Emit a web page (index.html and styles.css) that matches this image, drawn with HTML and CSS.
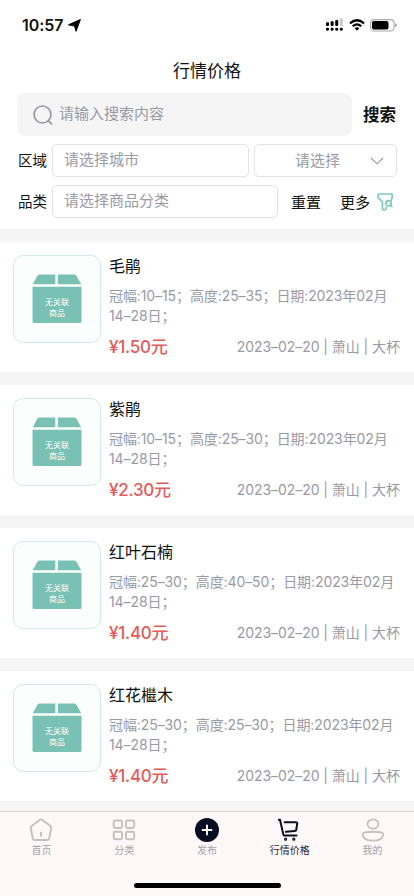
FILE: index.html
```html
<!DOCTYPE html>
<html lang="zh-CN">
<head>
<meta charset="utf-8">
<meta name="viewport" content="width=device-width, initial-scale=1">
<title>行情价格</title>
<link rel="stylesheet" href="styles.css">
</head>
<body>
<svg width="0" height="0" class="defs">
  <symbol id="box" viewBox="0 0 50 50">
    <path d="M7.5.5H23.3V10.3H.8L5.2 2Q6 .5 7.500 .5ZM26 .5H42.300Q43.800 .5 44.600 2L49.200 10.300H26Z"/>
    <path d="M.5 12.800H49.500V47.500Q49.500 49 48 49H2Q.5 49 .5 47.500Z"/>
  </symbol>
</svg>
<div class="statusbar">
  <span class="clock">10:57</span>
  <svg class="loc" width="13" height="13" viewBox="0 0 13 13"><path d="M12.400 .5 8 12.300 6.500 7.100.5 5.800Z" stroke="#000" stroke-width="1" stroke-linejoin="round"/></svg>
  <svg class="signal" width="17" height="14" viewBox="0 0 17 14"><g><rect x="0" y="4.300" width="3" height="3.700" rx="1"/><rect x="4.600" y="3.300" width="3" height="4.700" rx="1"/><rect x="9.200" y="2" width="3" height="6" rx="1"/><rect x="13.800" y=".3" width="3" height="7.700" rx="1" fill="#ccc"/><rect x="0" y="9.700" width="3" height="3" rx="1.100"/><rect x="4.600" y="9.700" width="3" height="3" rx="1.100"/><rect x="9.200" y="9.700" width="3" height="3" rx="1.100"/><rect x="13.800" y="9.700" width="3" height="3" rx="1.100"/></g></svg>
  <svg class="wifi" width="16" height="12" viewBox="0 0 16 12"><g fill="none" stroke="#000" stroke-width="2.200"><path d="M1 4.400Q8-1.900 15 4.400"/><path d="M3.700 7.300Q8 3.500 12.300 7.300"/></g><path d="M5.700 9.200Q8 7.400 10.300 9.200L8 11.700Z"/></svg>
  <svg class="battery" width="27" height="13" viewBox="0 0 27 13"><rect x=".6" y=".6" width="23.400" height="11.400" rx="3.500" fill="none" stroke="#aaa" stroke-width="1.100"/><rect x="2" y="2" width="16.500" height="8.600" rx="2"/><path d="M25.200 4.300Q26.700 5 26.700 6.300T25.200 8.300Z" fill="#999"/></svg>
</div>
<h1 class="title">行情价格</h1>
<div class="search">
  <div class="searchbox">
    <svg width="20" height="20" viewBox="0 0 20 20" fill="none" stroke="#9698a6" stroke-width="1.700" stroke-linecap="round"><circle cx="9.500" cy="9.500" r="8.500"/><path d="m15.600 15.800 2.900 3"/></svg>
    <span>请输入搜索内容</span>
  </div>
  <b class="go">搜索</b>
</div>
<div class="filter">
  <span class="name">区域</span>
  <div class="field city">请选择城市</div>
  <div class="field pick"><span>请选择</span><svg width="14" height="8" viewBox="0 0 14 8" fill="none" stroke="#96969e" stroke-width="1.100"><path d="m1 1 6 5.800L13 1"/></svg></div>
</div>
<div class="filter last">
  <span class="name">品类</span>
  <div class="field kind">请选择商品分类</div>
  <span class="reset">重置</span>
  <span class="more">更多</span>
  <svg class="funnel" width="17" height="18" viewBox="0 0 17 18" fill="none" stroke="#7dcabc" stroke-width="1.700" stroke-linejoin="round" stroke-linecap="round"><path d="M15.200 5V1.500Q15.200 1 14.600 1H2Q1 1 1 2V3.600Q1 4.500 1.700 5.200L5.500 9.200V15.500Q5.500 16.800 6.500 16.800H7.300Q9.300 16.400 9.300 14.600"/><circle cx="11.600" cy="10.200" r="2.600"/><path d="m13.600 12.200 1.400 1.500M15.200 5l-1.200 2.500"/></svg>
</div>
<main class="list">
  <article class="card">
    <div class="thumb"><svg class="box"><use href="#box"/></svg><span class="none">无关联<br>商品</span></div>
    <div class="info"><h2>毛鹃</h2><p>冠幅:10–15；高度:25–35；日期:2023年02月<br>14–28日；</p>
      <div class="row"><strong>¥1.50元</strong><span>2023–02–20 | 萧山 | 大杯</span></div></div>
  </article>
  <article class="card">
    <div class="thumb"><svg class="box"><use href="#box"/></svg><span class="none">无关联<br>商品</span></div>
    <div class="info"><h2>紫鹃</h2><p>冠幅:10–15；高度:25–30；日期:2023年02月<br>14–28日；</p>
      <div class="row"><strong>¥2.30元</strong><span>2023–02–20 | 萧山 | 大杯</span></div></div>
  </article>
  <article class="card">
    <div class="thumb"><svg class="box"><use href="#box"/></svg><span class="none">无关联<br>商品</span></div>
    <div class="info"><h2>红叶石楠</h2><p>冠幅:25–30；高度:40–50；日期:2023年02月<br>14–28日；</p>
      <div class="row"><strong>¥1.40元</strong><span>2023–02–20 | 萧山 | 大杯</span></div></div>
  </article>
  <article class="card">
    <div class="thumb"><svg class="box"><use href="#box"/></svg><span class="none">无关联<br>商品</span></div>
    <div class="info"><h2>红花檵木</h2><p>冠幅:25–30；高度:25–30；日期:2023年02月<br>14–28日；</p>
      <div class="row"><strong>¥1.40元</strong><span>2023–02–20 | 萧山 | 大杯</span></div></div>
  </article>
</main>
<footer class="tabbar">
  <nav class="tabs">
    <div class="tab"><svg width="24" height="24" viewBox="0 0 24 24" fill="none" stroke="#c5bfc0" stroke-width="1.900" stroke-linecap="round" stroke-linejoin="round"><path d="M10.700 2Q12 1.100 13.300 2L21.400 8Q22.500 8.900 22.200 10.200L20.300 20.200Q19.900 22 18.200 22H5.800Q4.100 22 3.700 20.200L1.800 10.200Q1.500 8.900 2.600 8Z"/><path d="M12 14.800v3" stroke-width="2"/></svg>首页</div>
    <div class="tab"><svg width="24" height="24" viewBox="0 0 24 24" fill="none" stroke="#c5bfc0" stroke-width="1.900"><rect x="1.700" y="2.500" width="8.300" height="7.500" rx="1.500"/><rect x="13.900" y="2.500" width="8.300" height="7.500" rx="1.500"/><rect x="1.700" y="13.800" width="8.300" height="7.500" rx="1.500"/><rect x="13.900" y="13.800" width="8.300" height="7.500" rx="1.500"/></svg>分类</div>
    <div class="tab"><svg width="24" height="24" viewBox="0 0 24 24"><circle cx="12" cy="12" r="12" fill="#080f22"/><path d="M12 6.800v10.400M6.800 12h10.400" stroke="#fff" stroke-width="1.900"/></svg>发布</div>
    <div class="tab active"><svg width="24" height="24" viewBox="0 0 24 24" fill="none" stroke="#080f22" stroke-width="2" stroke-linecap="round" stroke-linejoin="round"><path d="M.8 1.800H2L5.400 16.800Q5.600 17.600 6.400 17.600H18.500M6.700 4.200H17.900Q19.400 4.200 19.200 5.700L18.300 11.500Q18.100 12.900 16.700 13L7.900 13.800"/><circle cx="7.600" cy="21.200" r=".6"/><circle cx="15.800" cy="21.200" r=".6"/></svg>行情价格</div>
    <div class="tab"><svg width="24" height="24" viewBox="0 0 24 24" fill="none" stroke="#c5bfc0" stroke-width="1.800"><ellipse cx="12" cy="6.100" rx="5.500" ry="4.700"/><path d="M3.500 14.500Q12 13 20.500 14.500 22.500 15 22.200 17 21.300 22.700 12 22.700T1.800 17Q1.500 15 3.500 14.500Z"/></svg>我的</div>
  </nav>
  <div class="home"></div>
</footer>
</body>
</html>
```

FILE: styles.css
```css
* { box-sizing: border-box; }
body {
  margin: 0;
  width: 414px;
  height: 896px;
  overflow: hidden;
  display: flex;
  flex-direction: column;
  background: #fff;
  color: #111;
  font-family: Inter, "Noto Sans CJK SC", sans-serif;
}
svg { display: block; flex: none; }
.defs { display: none; }
.statusbar { height: 50px; flex: none; display: flex; align-items: center; padding: 0 17px 0 22px; }
.clock { font-size: 16px; font-weight: 600; letter-spacing: -.05px; width: 46px; white-space: nowrap; }
.signal { margin-left: auto; }
.wifi { margin-left: 6px; }
.battery { margin-left: 5px; }
.title { margin: 0; height: 43px; flex: none; line-height: 42px; text-align: center; font-size: 17px; font-weight: 400; }
.search { height: 43px; flex: none; display: flex; padding-left: 17px; align-items: center; }
.searchbox { width: 335px; height: 43px; border-radius: 8px; background: #f5f5f5; display: flex; align-items: center; padding-left: 16px; gap: 6px; color: #999aa5; font-size: 15px; line-height: 40px; }
.searchbox span { padding-bottom: 2px; }
.go { margin-left: 11px; padding-bottom: 1px; font-size: 16.5px; font-weight: 600; }
.filter { height: 33px; flex: none; margin-top: 8px; display: flex; align-items: center; padding-left: 18px; font-size: 15px; white-space: nowrap; }
.filter.last { margin-bottom: 11px; }
.name { width: 34px; font-size: 14.500px; padding-bottom: 2px; }
.field { height: 33px; border: 1px solid #e1e1e6; border-radius: 5px; color: #999aa5; line-height: 30px; padding-left: 11px; }
.city { width: 197px; }
.pick { width: 143px; margin-left: 5px; padding: 0 12px 0 40px; display: flex; align-items: center; justify-content: space-between; }
.kind { width: 226px; }
.reset { margin-left: 13px; padding-bottom: 1px; }
.more { margin-left: 19px; padding-bottom: 1px; }
.funnel { margin-left: 7px; }
.list { height: 582px; flex: none; background: #f5f5f5; padding-top: 13px; display: flex; flex-direction: column; gap: 13px; }
.card { height: 130px; flex: none; background: #fff; display: flex; padding: 13px 14px 0 13px; gap: 8px; }
.thumb { width: 88px; height: 88px; flex: none; border: 1px solid #cfebe5; border-radius: 10px; background: #fbfefd; display: grid; place-items: center; }
.box { grid-area: 1 / 1; width: 50px; height: 50px; fill: #79c1b5; }
.none { grid-area: 1 / 1; color: #fff; font-size: 8px; line-height: 11px; text-align: center; padding-top: 17px; }
.info { flex: 1; min-width: 0; }
.info h2 { margin: 0; font-size: 16px; font-weight: 400; line-height: 23px; height: 31px; }
.info p { margin: 0; font-size: 14px; line-height: 20px; height: 40px; color: #999aa5; white-space: nowrap; letter-spacing: -.09px; }
.row { display: flex; justify-content: space-between; align-items: center; height: 42px; white-space: nowrap; color: #999aa5; font-size: 14px; letter-spacing: -.05px; padding-bottom: 3px; }
.row strong { color: #e45b59; font-size: 17px; font-weight: 500; letter-spacing: -.25px; }
.tabbar { height: 85px; flex: none; border-top: 1px solid #d8d5d6; background: #fff8f8; }
.tabs { display: grid; grid-template-columns: repeat(5, 1fr); padding-top: 6px; }
.tab { display: flex; flex-direction: column; align-items: center; font-size: 10px; line-height: 14px; gap: 1px; color: #a5a2ac; }
.active { color: #252735; }
.home { width: 147px; height: 5px; border-radius: 3px; background: #000; margin: 26px auto 0; }
```
